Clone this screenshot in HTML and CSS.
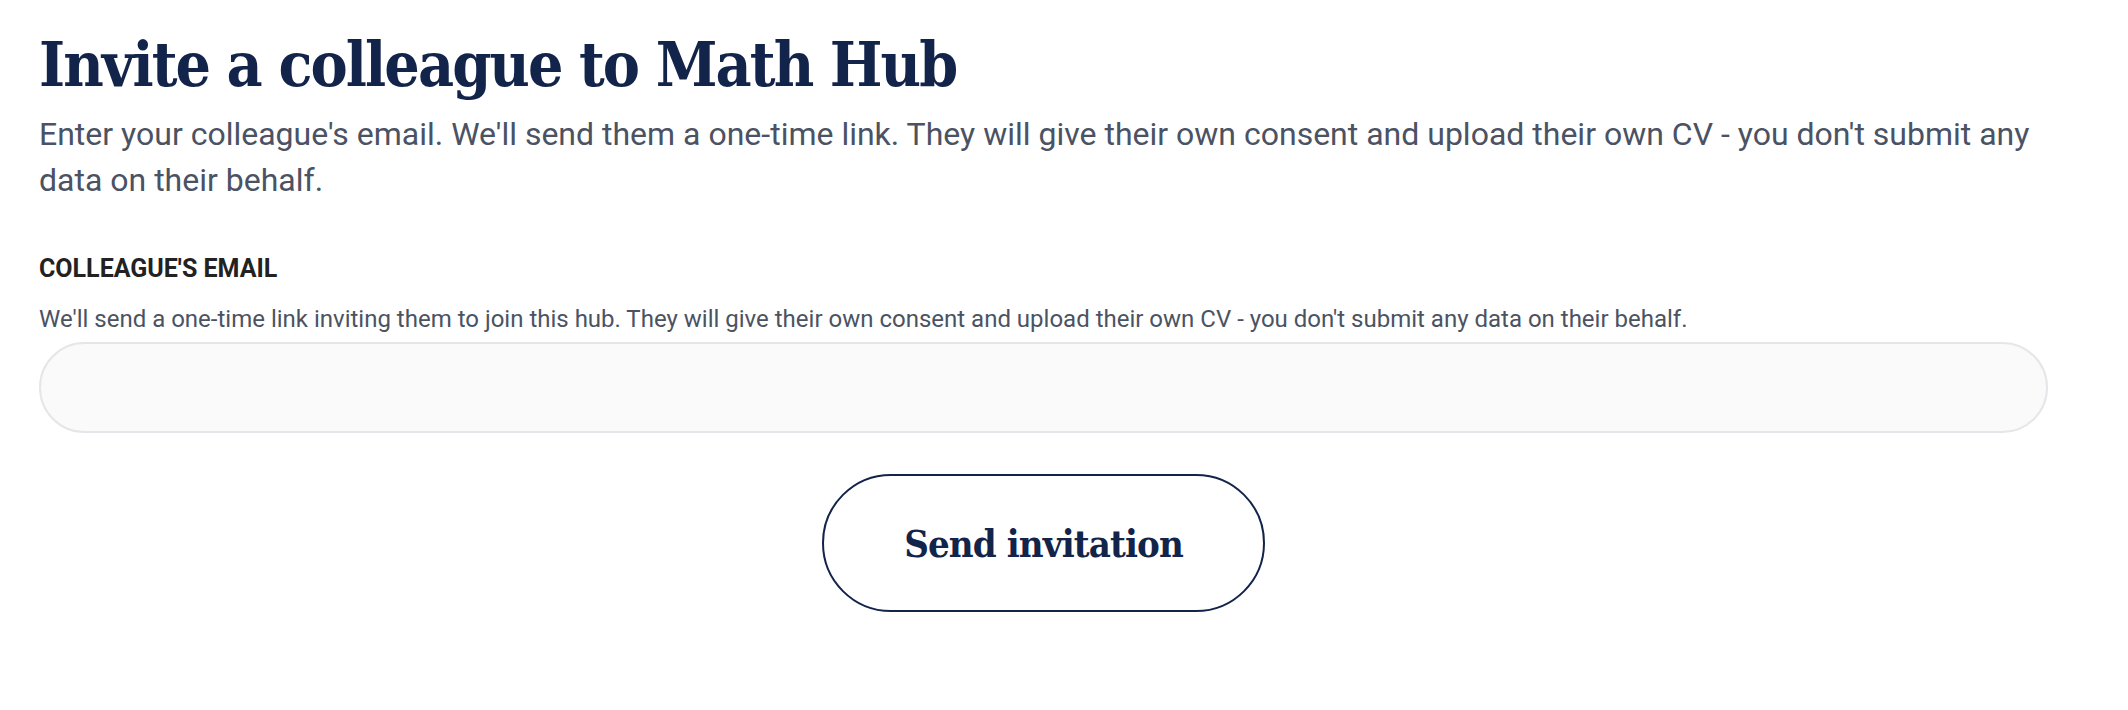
FILE: index.html
```html
<!DOCTYPE html>
<html lang="en">
<head>
  <meta charset="UTF-8">
  <meta name="viewport" content="width=device-width, initial-scale=1.0">
  <title>Invite a colleague</title>
  <link rel="stylesheet" href="styles.css">
</head>
<body>
  <main class="invite">
    <h1 class="invite-title">Invite a colleague to Math Hub</h1>
    <p class="invite-intro">Enter your colleague's email. We'll send them a one-time link. They will give their own consent and upload their own CV - you don't submit any data on their behalf.</p>

    <form class="invite-form" onsubmit="return false;">
      <label class="field-label" for="colleague-email">Colleague's email</label>
      <p class="field-help">We'll send a one-time link inviting them to join this hub. They will give their own consent and upload their own CV - you don't submit any data on their behalf.</p>
      <input class="field-input" id="colleague-email" type="email" autocomplete="off">

      <div class="form-actions">
        <button class="btn-outline" type="submit">Send invitation</button>
      </div>
    </form>
  </main>
</body>
</html>
```

FILE: styles.css
```css
/* Base */
body {
  margin: 0;
  background: #fff;
  font-family: Roboto, 'Noto Sans', Arial, sans-serif;
  color: #222;
}

.invite {
  width: 2009px;
  padding: 26px 0 0 39px;
}

/* Heading + intro */
.invite-title {
  margin: 0;
  font-family: 'DejaVu Serif', 'Liberation Serif', serif;
  font-stretch: condensed;
  font-weight: bold;
  font-size: 62px;
  line-height: 78px;
  letter-spacing: -1.9px;
  color: #13244a;
}

.invite-intro {
  margin: 7px 0 0;
  font-size: 32px;
  line-height: 46px;
  color: #4a5263;
}

/* Form */
.invite-form {
  display: flex;
  flex-direction: column;
  margin-top: 50px;
}

.field-label {
  font-size: 25px;
  line-height: 32px;
  font-weight: bold;
  text-transform: uppercase;
  color: #222;
}

.field-help {
  margin: 18px 0 0;
  font-size: 24px;
  line-height: 32px;
  color: #4b5363;
}

.field-input {
  box-sizing: border-box;
  margin-top: 7px;
  width: 100%;
  height: 91px;
  padding: 0 32px;
  border: 2px solid #e6e6ea;
  border-radius: 46px;
  background: #fafafa;
  font: inherit;
  font-size: 24px;
  outline: none;
}

.form-actions {
  display: flex;
  justify-content: center;
  margin-top: 41px;
}

.btn-outline {
  box-sizing: border-box;
  width: 443px;
  height: 138px;
  border: 2px solid #13244a;
  border-radius: 69px;
  background: #fff;
  font-family: 'DejaVu Serif', 'Liberation Serif', serif;
  font-stretch: condensed;
  font-weight: bold;
  font-size: 38px;
  letter-spacing: -0.9px;
  color: #13244a;
  cursor: pointer;
}
```
